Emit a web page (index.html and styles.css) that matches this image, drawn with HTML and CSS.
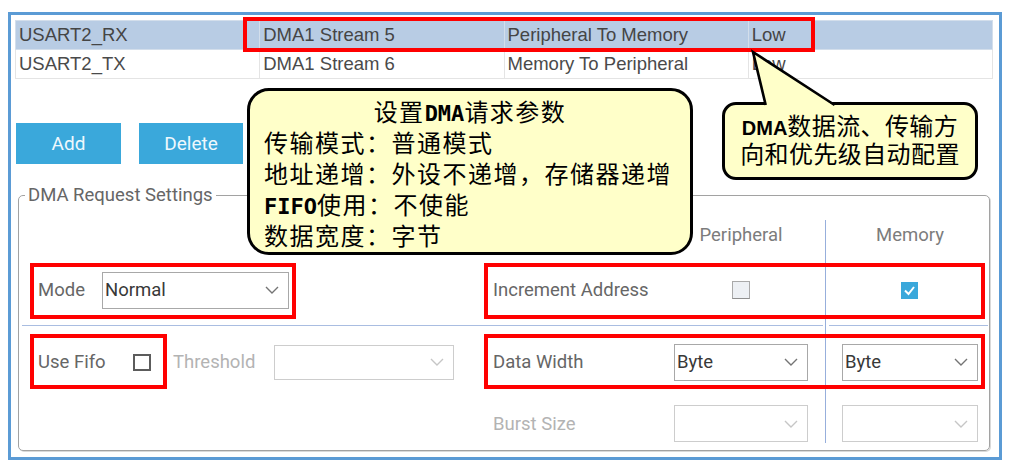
FILE: index.html
```html
<!DOCTYPE html>
<html lang="zh-CN">
<head>
<meta charset="utf-8">
<title>DMA Request Settings</title>
<link rel="stylesheet" href="styles.css">
</head>
<body>
<div class="frame">
  <table class="streams">
    <tr class="sel"><td>USART2_RX</td><td>DMA1 Stream 5</td><td>Peripheral To Memory</td><td>Low</td></tr>
    <tr><td>USART2_TX</td><td>DMA1 Stream 6</td><td>Memory To Peripheral</td><td>Low</td></tr>
  </table>

  <div class="actions">
    <button class="btn btn-add">Add</button>
    <button class="btn btn-del">Delete</button>
  </div>

  <fieldset class="settings">
    <legend>DMA Request Settings</legend>
    <div class="grid">
      <div class="blank-head"></div>
      <div class="cell hdr col-p"><span class="hdr-text">Peripheral</span></div>
      <div class="cell hdr col-m mem"><span class="hdr-text">Memory</span></div>

      <div class="cell col-left">
        <span class="lbl lbl-mode">Mode</span>
        <div class="select sel-mode"><span>Normal</span><svg class="chev" viewBox="0 0 14 8"><polyline points="1,1 7,7 13,1"/></svg></div>
      </div>
      <div class="cell col-l"><span class="lbl">Increment Address</span></div>
      <div class="cell col-p"><span class="cb cb-off"></span></div>
      <div class="cell col-m mem"><span class="cb cb-on"><svg viewBox="0 0 17 17"><polyline points="4,8.5 7.5,12 13,5"/></svg></span></div>

      <div class="divider"></div>
      <div class="divider-mem mem"></div>

      <div class="cell col-left">
        <span class="lbl lbl-fifo">Use Fifo</span>
        <span class="cb cb-fifo"></span>
        <span class="lbl dim lbl-thr">Threshold</span>
        <div class="select sel-thr disabled"><span></span><svg class="chev" viewBox="0 0 14 8"><polyline points="1,1 7,7 13,1"/></svg></div>
      </div>
      <div class="cell col-l"><span class="lbl">Data Width</span></div>
      <div class="cell col-p"><div class="select sel-p"><span>Byte</span><svg class="chev" viewBox="0 0 14 8"><polyline points="1,1 7,7 13,1"/></svg></div></div>
      <div class="cell col-m mem"><div class="select sel-m"><span>Byte</span><svg class="chev" viewBox="0 0 14 8"><polyline points="1,1 7,7 13,1"/></svg></div></div>

      <div class="cell col-l last-row"><span class="lbl dim">Burst Size</span></div>
      <div class="cell col-p last-row top"><div class="select sel-p disabled"><span></span><svg class="chev" viewBox="0 0 14 8"><polyline points="1,1 7,7 13,1"/></svg></div></div>
      <div class="cell col-m mem last-row top last-mem"><div class="select sel-m disabled"><span></span><svg class="chev" viewBox="0 0 14 8"><polyline points="1,1 7,7 13,1"/></svg></div></div>
    </div>
  </fieldset>

  <div class="note note-stream"></div>
  <div class="note note-mode"></div>
  <div class="note note-fifo"></div>
  <div class="note note-inc"></div>
  <div class="note note-width"></div>

  <div class="callout callout-main">
    <p class="c-title">设置<b class="mono">DMA</b>请求参数</p>
    <p>传输模式：普通模式</p>
    <p>地址递增：外设不递增，存储器递增</p>
    <p><b class="mono">FIFO</b>使用：不使能</p>
    <p>数据宽度：字节</p>
  </div>

  <div class="callout callout-auto">
    <p><b class="sans-b">DMA</b>数据流、传输方</p>
    <p>向和优先级自动配置</p>
  </div>
  <svg class="tail" viewBox="0 0 90 56">
    <polygon class="tail-fill" points="2,2 14.7,56 83.6,56"/>
    <polyline class="tail-line" points="14.7,55 2,2 83.6,55"/>
  </svg>
</div>
</body>
</html>
```

FILE: styles.css
```css
html, body {
  margin: 0;
  background: #ffffff;
}

body {
  font-family: Roboto, "Liberation Sans", sans-serif;
}

.frame {
  position: relative;
  box-sizing: border-box;
  width: 994px;
  height: 448px;
  margin: 12px 0 0 8px;
  border: 3px solid #5b9bd5;
  padding: 5px 6px 0 4px;
  background: #ffffff;
}

/* ---------- stream table ---------- */
.streams {
  width: 100%;
  border-collapse: collapse;
  table-layout: fixed;
  font-family: "Liberation Sans", Arial, sans-serif;
  font-size: 18.5px;
  color: #4a4a4a;
}

.streams td {
  height: 28px;
  padding: 0 0 0 3px;
  line-height: 28px;
  border: 1px solid #e4e4e4;
  white-space: nowrap;
  overflow: hidden;
}

.streams tr.sel td {
  background: #b8cce4;
  border-color: #d3deeb;
  color: #454545;
}

/* ---------- buttons ---------- */
.actions {
  display: flex;
  gap: 18px;
  margin: 44px 0 0 1px;
}

.btn {
  height: 41px;
  border: 0;
  padding: 0;
  background: #3aa8db;
  color: #eef8fd;
  font-family: Roboto, sans-serif;
  font-size: 19px;
}

.btn-add { width: 105px; }
.btn-del { width: 104px; }

/* ---------- settings fieldset ---------- */
.settings {
  margin: 21px 3px 0 3px;
  padding: 0;
  border: 1px solid #a2a2a2;
  border-radius: 5px;
  box-shadow: 1px 1px 0 #d9d9d9;
  min-inline-size: 0;
}

.settings legend {
  margin-left: 6px;
  padding: 0 3px;
  font-size: 18.5px;
  line-height: 20px;
  color: #666666;
}

.grid {
  display: grid;
  grid-template-columns: 465px 189px 152px 1fr;
  grid-template-rows: 50px 70px 1px 72px 52px;
}

.cell {
  display: flex;
  align-items: center;
  min-width: 0;
}

.blank-head { grid-column: 1 / 3; }

.col-left { grid-column: 1; padding-left: 19px; }
.col-l { grid-column: 2; padding-left: 9px; }
.col-p { grid-column: 3; }
.col-m { grid-column: 4; }

.mem { border-left: 1px solid #97afdc; }

.hdr {
  padding-top: 10px;
  color: #7c7c7c;
  font-size: 18.5px;
}

.hdr-text {
  width: 136px;
  text-align: center;
}

.col-m.hdr {
  margin-top: 15px;
  padding-top: 0;
  padding-bottom: 5px;
}
.col-m .hdr-text { margin-left: 16px; }

.lbl {
  font-size: 18.5px;
  color: #666666;
  white-space: nowrap;
}

.lbl.dim { color: #b3b3b3; }

.lbl-mode { width: 64px; }
.lbl-fifo { width: 95px; }
.lbl-thr { width: 101px; margin-left: 22px; }

.divider {
  grid-column: 1 / 4;
  margin: 0 2px 0 3px;
  background: #a9bde1;
}

.divider-mem {
  grid-column: 4;
}

.divider-mem::after {
  content: "";
  display: block;
  height: 1px;
  margin: 0 1px 0 3px;
  background: #a9bde1;
}

.last-row { grid-row: 5; }
.last-row.top { align-items: flex-start; padding-top: 7px; }
.last-mem { margin-bottom: 7px; }

/* ---------- selects ---------- */
.select {
  box-sizing: border-box;
  display: flex;
  align-items: center;
  justify-content: space-between;
  height: 37px;
  padding: 0 9px 0 2px;
  border: 1px solid #a8a8a8;
  background: #ffffff;
  font-size: 18.5px;
  color: #383838;
}

.select.disabled { border-color: #cdcdcd; }

.chev {
  width: 14px;
  height: 8px;
  fill: none;
  stroke: #747474;
  stroke-width: 1.4;
}

.select.disabled .chev { stroke: #c6c6c6; }

.sel-mode { width: 187px; }
.sel-thr { width: 180px; height: 35px; }
.sel-p { width: 134px; margin-left: 1px; }
.sel-m { width: 136px; margin-left: 16px; }

/* ---------- checkboxes ---------- */
.cb {
  box-sizing: border-box;
  display: block;
  flex: none;
}

.cb-fifo {
  width: 18px;
  height: 17px;
  border: 2px solid #5c5c5c;
  background: #ffffff;
}

.cb-off {
  width: 18px;
  height: 18px;
  margin-left: 59px;
  border: 1px solid #a9a9a9;
  border-bottom-color: #8f8f8f;
  background: #edf0f4;
}

.cb-on {
  width: 17px;
  height: 17px;
  margin-left: 75px;
  background: #3aa8db;
}

.cb-on svg {
  display: block;
  width: 17px;
  height: 17px;
  fill: none;
  stroke: #ffffff;
  stroke-width: 2;
}

/* ---------- annotation overlays ---------- */
.note {
  position: absolute;
  box-sizing: border-box;
  border: 4px solid #ff0000;
  z-index: 3;
}

.note-stream { left: 232px; top: 2px; width: 572px; height: 35px; }
.note-mode { left: 19px; top: 248px; width: 266px; height: 56px; }
.note-fifo { left: 19px; top: 319px; width: 137px; height: 55px; }
.note-inc { left: 473px; top: 248px; width: 501px; height: 56px; }
.note-width { left: 473px; top: 319px; width: 501px; height: 55px; }

.callout {
  position: absolute;
  box-sizing: border-box;
  background: #ffffc9;
  border: 3px solid #000000;
  font-family: "Noto Sans CJK SC", sans-serif;
  color: #000000;
  z-index: 4;
}

.callout p {
  margin: 0;
  white-space: nowrap;
}

.callout-main {
  left: 236px;
  top: 73px;
  width: 446px;
  height: 167px;
  border-radius: 22px;
  padding: 4px 0 0 14px;
  font-size: 24px;
  line-height: 31px;
  letter-spacing: 1.5px;
}

.callout-main p {
  height: 31px;
}

.c-title {
  margin-left: -14px !important;
  text-align: center;
}

.mono {
  font-family: "DejaVu Sans Mono", "Liberation Mono", monospace;
  font-weight: bold;
  font-size: 22px;
  line-height: 1;
  letter-spacing: 0;
}

.callout-auto {
  left: 711px;
  top: 87px;
  width: 256px;
  height: 78px;
  border-radius: 14px;
  padding-top: 6px;
  text-align: center;
  font-size: 24px;
  line-height: 28px;
  letter-spacing: 0.4px;
}

.callout-auto p {
  height: 28px;
}

.sans-b {
  font-family: "Liberation Sans", Arial, sans-serif;
  font-weight: bold;
  font-size: 20px;
  line-height: 1;
  letter-spacing: 0;
}

.tail {
  position: absolute;
  left: 740px;
  top: 35px;
  width: 90px;
  height: 56px;
  overflow: visible;
  z-index: 5;
}

.tail-fill { fill: #ffffc9; stroke: none; }
.tail-line {
  fill: none;
  stroke: #000000;
  stroke-width: 2.6;
  stroke-linejoin: miter;
  stroke-miterlimit: 20;
}
```
